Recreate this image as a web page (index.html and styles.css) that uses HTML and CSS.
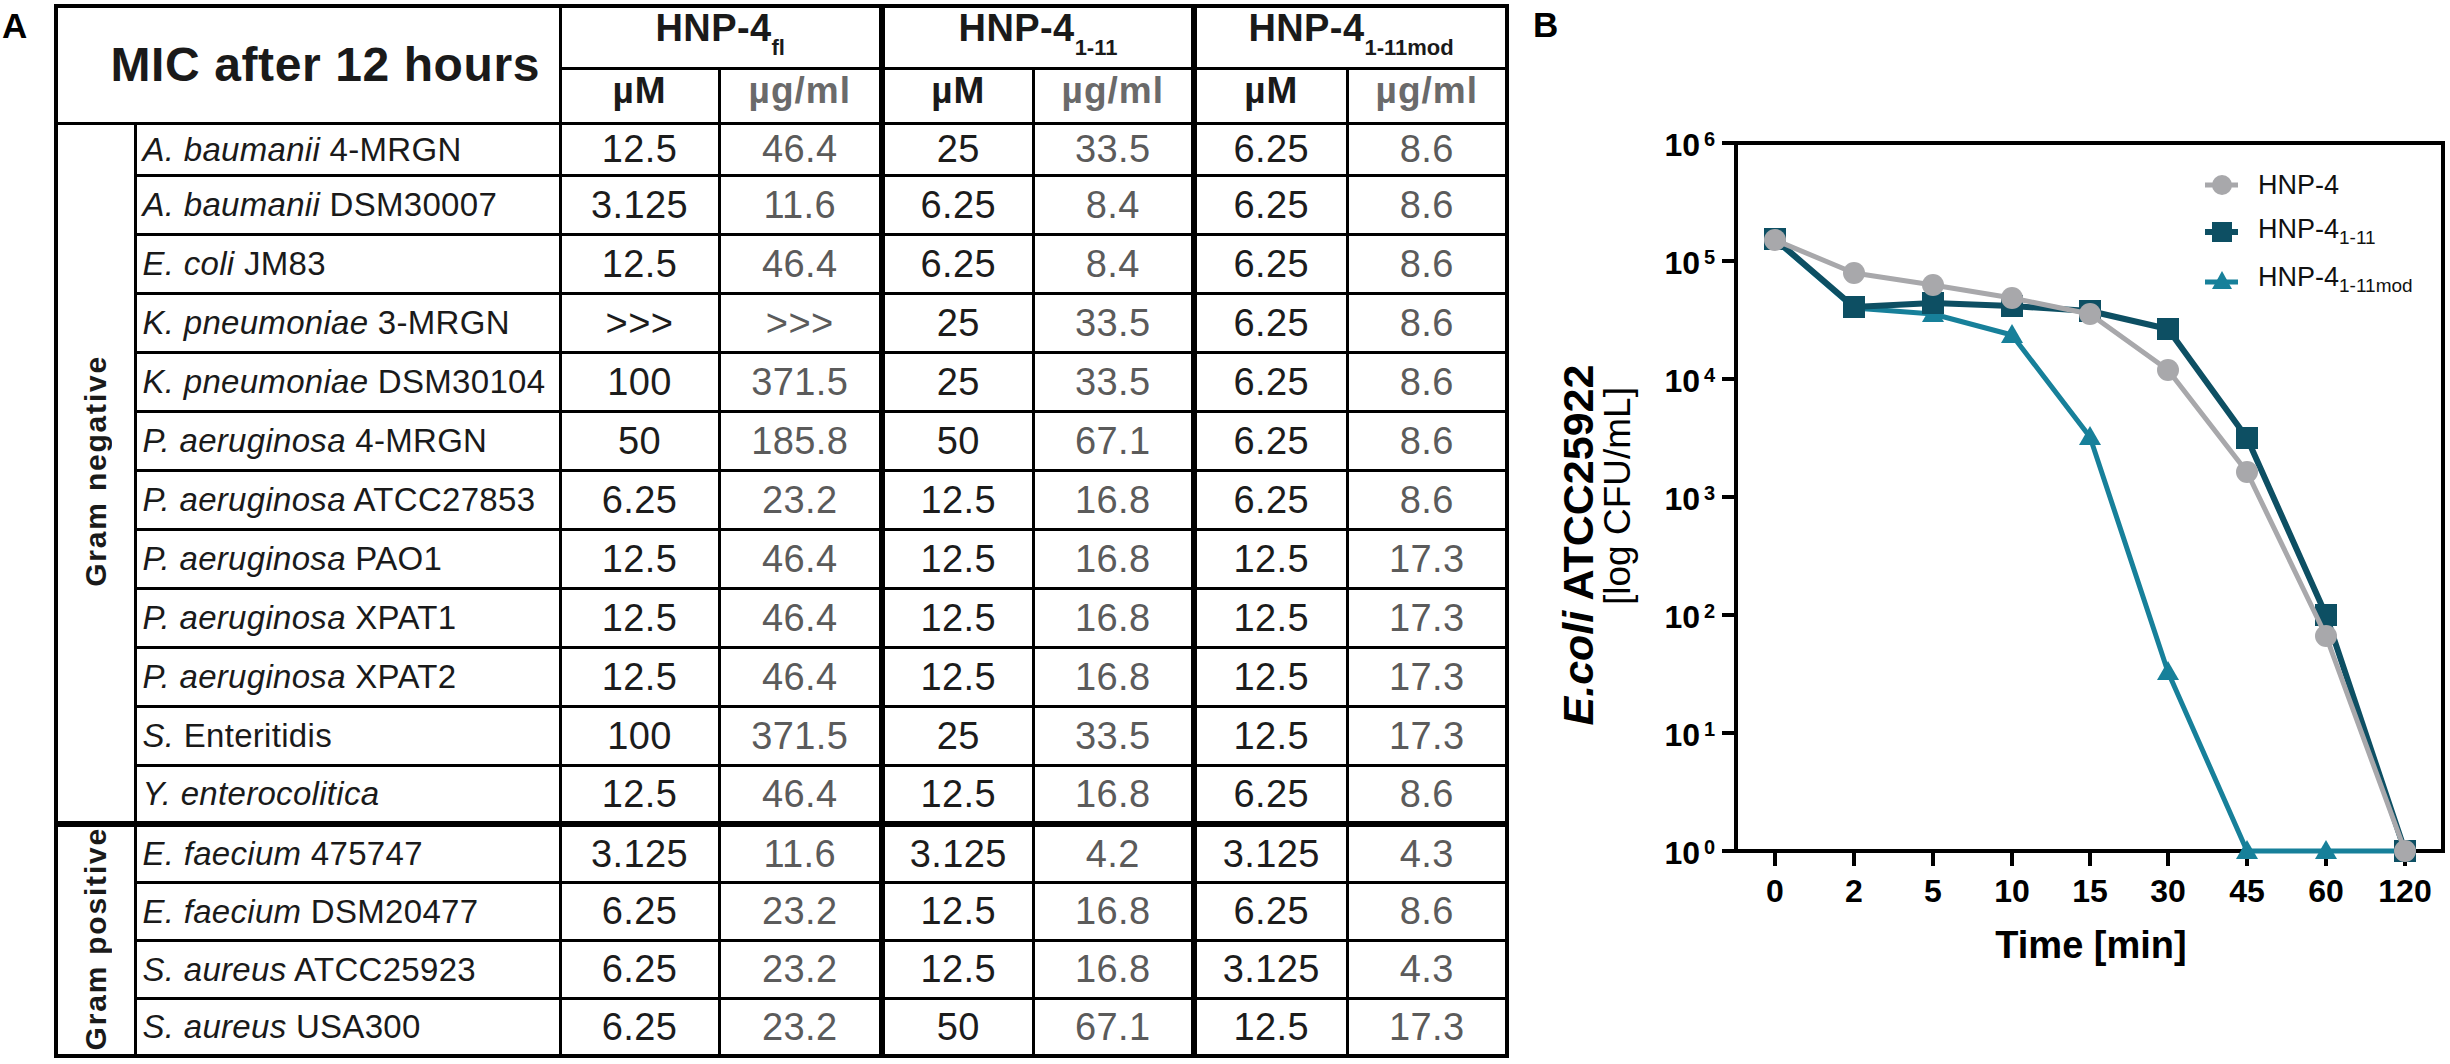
FILE: index.html
```html
<!DOCTYPE html>
<html lang="en">
<head>
  <meta charset="UTF-8">
  <title>MIC and time-kill of HNP-4 peptides</title>
  <link rel="stylesheet" href="styles.css">
</head>
<body>
  <div class="figure">
    <div class="panel-a">
      <div class="label label-a">A</div>
      <table class="mic">
        <colgroup>
          <col style="width:79px">
          <col style="width:425px">
          <col style="width:159px">
          <col style="width:163px">
          <col style="width:151px">
          <col style="width:161px">
          <col style="width:153px">
          <col style="width:160px">
        </colgroup>
        <thead>
          <tr class="h1">
            <th colspan="2" rowspan="2" class="title">MIC after 12 hours</th>
            <th colspan="2" class="pep">HNP-4<sub>fl</sub></th>
            <th colspan="2" class="pep grp">HNP-4<sub>1-11</sub></th>
            <th colspan="2" class="pep grp">HNP-4<sub>1-11mod</sub></th>
          </tr>
          <tr class="h2">
            <th class="unit">µM</th><th class="unit g">µg/ml</th>
            <th class="unit grp">µM</th><th class="unit g">µg/ml</th>
            <th class="unit grp">µM</th><th class="unit g">µg/ml</th>
          </tr>
        </thead>
        <tbody>
          <tr class="first">
            <th rowspan="12" class="gram"><span>Gram negative</span></th>
            <td class="sp"><i>A. baumanii</i> 4-MRGN</td>
            <td>12.5</td><td class="g">46.4</td><td class="grp">25</td><td class="g">33.5</td><td class="grp">6.25</td><td class="g">8.6</td>
          </tr>
          <tr>
            <td class="sp"><i>A. baumanii</i> DSM30007</td>
            <td>3.125</td><td class="g">11.6</td><td class="grp">6.25</td><td class="g">8.4</td><td class="grp">6.25</td><td class="g">8.6</td>
          </tr>
          <tr>
            <td class="sp"><i>E. coli</i> JM83</td>
            <td>12.5</td><td class="g">46.4</td><td class="grp">6.25</td><td class="g">8.4</td><td class="grp">6.25</td><td class="g">8.6</td>
          </tr>
          <tr>
            <td class="sp"><i>K. pneumoniae</i> 3-MRGN</td>
            <td class="arrows">&gt;&gt;&gt;</td><td class="g arrows">&gt;&gt;&gt;</td><td class="grp">25</td><td class="g">33.5</td><td class="grp">6.25</td><td class="g">8.6</td>
          </tr>
          <tr>
            <td class="sp"><i>K. pneumoniae</i> DSM30104</td>
            <td>100</td><td class="g">371.5</td><td class="grp">25</td><td class="g">33.5</td><td class="grp">6.25</td><td class="g">8.6</td>
          </tr>
          <tr>
            <td class="sp"><i>P. aeruginosa</i> 4-MRGN</td>
            <td>50</td><td class="g">185.8</td><td class="grp">50</td><td class="g">67.1</td><td class="grp">6.25</td><td class="g">8.6</td>
          </tr>
          <tr>
            <td class="sp"><i>P. aeruginosa</i> ATCC27853</td>
            <td>6.25</td><td class="g">23.2</td><td class="grp">12.5</td><td class="g">16.8</td><td class="grp">6.25</td><td class="g">8.6</td>
          </tr>
          <tr>
            <td class="sp"><i>P. aeruginosa</i> PAO1</td>
            <td>12.5</td><td class="g">46.4</td><td class="grp">12.5</td><td class="g">16.8</td><td class="grp">12.5</td><td class="g">17.3</td>
          </tr>
          <tr>
            <td class="sp"><i>P. aeruginosa</i> XPAT1</td>
            <td>12.5</td><td class="g">46.4</td><td class="grp">12.5</td><td class="g">16.8</td><td class="grp">12.5</td><td class="g">17.3</td>
          </tr>
          <tr>
            <td class="sp"><i>P. aeruginosa</i> XPAT2</td>
            <td>12.5</td><td class="g">46.4</td><td class="grp">12.5</td><td class="g">16.8</td><td class="grp">12.5</td><td class="g">17.3</td>
          </tr>
          <tr>
            <td class="sp"><i>S.</i> Enteritidis</td>
            <td>100</td><td class="g">371.5</td><td class="grp">25</td><td class="g">33.5</td><td class="grp">12.5</td><td class="g">17.3</td>
          </tr>
          <tr>
            <td class="sp"><i>Y. enterocolitica</i></td>
            <td>12.5</td><td class="g">46.4</td><td class="grp">12.5</td><td class="g">16.8</td><td class="grp">6.25</td><td class="g">8.6</td>
          </tr>
          <tr class="pos split">
            <th rowspan="4" class="gram"><span>Gram positive</span></th>
            <td class="sp"><i>E. faecium</i> 475747</td>
            <td>3.125</td><td class="g">11.6</td><td class="grp">3.125</td><td class="g">4.2</td><td class="grp">3.125</td><td class="g">4.3</td>
          </tr>
          <tr class="pos">
            <td class="sp"><i>E. faecium</i> DSM20477</td>
            <td>6.25</td><td class="g">23.2</td><td class="grp">12.5</td><td class="g">16.8</td><td class="grp">6.25</td><td class="g">8.6</td>
          </tr>
          <tr class="pos">
            <td class="sp"><i>S. aureus</i> ATCC25923</td>
            <td>6.25</td><td class="g">23.2</td><td class="grp">12.5</td><td class="g">16.8</td><td class="grp">3.125</td><td class="g">4.3</td>
          </tr>
          <tr class="pos">
            <td class="sp"><i>S. aureus</i> USA300</td>
            <td>6.25</td><td class="g">23.2</td><td class="grp">50</td><td class="g">67.1</td><td class="grp">12.5</td><td class="g">17.3</td>
          </tr>
        </tbody>
      </table>
    </div>

    <svg class="chart" width="930" height="1064" viewBox="1520 0 930 1064">
      <text class="panel-label" x="1533" y="37">B</text>

      <!-- axis titles -->
      <text class="ytitle" transform="translate(1593 545) rotate(-90)" text-anchor="middle"><tspan font-style="italic">E.coli</tspan> ATCC25922</text>
      <text class="yunit" transform="translate(1630 496) rotate(-90)" text-anchor="middle">[log CFU/mL]</text>
      <text class="xtitle" x="2091" y="958" text-anchor="middle">Time [min]</text>

      <!-- frame and ticks -->
      <path class="axis" d="M1736 143 H2443 V851 H1722 M1736 141 V853"/>
      <path class="axis" d="M1722 143H1736 M1722 261H1736 M1722 379H1736 M1722 497H1736 M1722 615H1736 M1722 733H1736"/>
      <path class="axis" d="M1775 851V866 M1854 851V866 M1933 851V866 M2012 851V866 M2090 851V866 M2168 851V866 M2247 851V866 M2326 851V866 M2405 851V866"/>

      <!-- y tick labels -->
      <text class="tick" x="1700" y="156" text-anchor="end">10</text><text class="sup" x="1704" y="146">6</text>
      <text class="tick" x="1700" y="274" text-anchor="end">10</text><text class="sup" x="1704" y="264">5</text>
      <text class="tick" x="1700" y="392" text-anchor="end">10</text><text class="sup" x="1704" y="382">4</text>
      <text class="tick" x="1700" y="510" text-anchor="end">10</text><text class="sup" x="1704" y="500">3</text>
      <text class="tick" x="1700" y="628" text-anchor="end">10</text><text class="sup" x="1704" y="618">2</text>
      <text class="tick" x="1700" y="746" text-anchor="end">10</text><text class="sup" x="1704" y="736">1</text>
      <text class="tick" x="1700" y="864" text-anchor="end">10</text><text class="sup" x="1704" y="854">0</text>

      <!-- x tick labels -->
      <text class="tick" x="1775" y="902" text-anchor="middle">0</text>
      <text class="tick" x="1854" y="902" text-anchor="middle">2</text>
      <text class="tick" x="1933" y="902" text-anchor="middle">5</text>
      <text class="tick" x="2012" y="902" text-anchor="middle">10</text>
      <text class="tick" x="2090" y="902" text-anchor="middle">15</text>
      <text class="tick" x="2168" y="902" text-anchor="middle">30</text>
      <text class="tick" x="2247" y="902" text-anchor="middle">45</text>
      <text class="tick" x="2326" y="902" text-anchor="middle">60</text>
      <text class="tick" x="2405" y="902" text-anchor="middle">120</text>

      <!-- HNP-4 1-11mod -->
      <polyline class="line teal" points="1775,240 1854,308 1933,314 2012,335 2090,437 2168,672 2247,851 2326,851 2405,851"/>
      <g class="teal-fill">
        <path d="M1775 229 L1786 248 L1764 248 Z"/>
        <path d="M1854 297 L1865 316 L1843 316 Z"/>
        <path d="M1933 303 L1944 322 L1922 322 Z"/>
        <path d="M2012 324 L2023 343 L2001 343 Z"/>
        <path d="M2090 426 L2101 445 L2079 445 Z"/>
        <path d="M2168 661 L2179 680 L2157 680 Z"/>
        <path d="M2247 840 L2258 859 L2236 859 Z"/>
        <path d="M2326 840 L2337 859 L2315 859 Z"/>
        <path d="M2405 840 L2416 859 L2394 859 Z"/>
      </g>

      <!-- HNP-4 1-11 -->
      <polyline class="line dark" points="1775,239 1854,307 1933,303 2012,306 2090,311 2168,329 2247,438 2326,615 2405,851"/>
      <g class="dark-fill">
        <rect x="1764" y="228" width="22" height="22"/>
        <rect x="1843" y="296" width="22" height="22"/>
        <rect x="1922" y="292" width="22" height="22"/>
        <rect x="2001" y="295" width="22" height="22"/>
        <rect x="2079" y="300" width="22" height="22"/>
        <rect x="2157" y="318" width="22" height="22"/>
        <rect x="2236" y="427" width="22" height="22"/>
        <rect x="2315" y="604" width="22" height="22"/>
        <rect x="2394" y="840" width="22" height="22"/>
      </g>

      <!-- HNP-4 -->
      <polyline class="line gray" points="1775,240 1854,273 1933,285 2012,298 2090,314 2168,370 2247,472 2326,636 2405,851"/>
      <g class="gray-fill">
        <circle cx="1775" cy="240" r="11"/>
        <circle cx="1854" cy="273" r="11"/>
        <circle cx="1933" cy="285" r="11"/>
        <circle cx="2012" cy="298" r="11"/>
        <circle cx="2090" cy="314" r="11"/>
        <circle cx="2168" cy="370" r="11"/>
        <circle cx="2247" cy="472" r="11"/>
        <circle cx="2326" cy="636" r="11"/>
        <circle cx="2405" cy="851" r="11"/>
      </g>

      <!-- legend -->
      <line class="line gray" x1="2205" y1="185" x2="2238" y2="185"/>
      <circle class="gray-fill" cx="2222" cy="185" r="10"/>
      <text class="legend" x="2258" y="194">HNP-4</text>

      <line class="line dark" x1="2205" y1="232" x2="2238" y2="232"/>
      <rect class="dark-fill" x="2212" y="222" width="20" height="20"/>
      <text class="legend" x="2258" y="238">HNP-4<tspan class="lsub" dy="6">1-11</tspan></text>

      <line class="line teal" x1="2205" y1="282" x2="2238" y2="282"/>
      <path class="teal-fill" d="M2222 271 L2232 289 L2212 289 Z"/>
      <text class="legend" x="2258" y="286">HNP-4<tspan class="lsub" dy="6">1-11mod</tspan></text>
    </svg>
  </div>
</body>
</html>
```

FILE: styles.css
```css
* {
  margin: 0;
  padding: 0;
  box-sizing: border-box;
}
body {
  background: #fff;
  color: #1a1a1a;
  font-family: 'Liberation Sans', Arial, sans-serif;
  width: 2450px;
  height: 1064px;
  overflow: hidden;
}
.figure {
  display: flex;
  align-items: flex-start;
}
.label {
  font-weight: 700;
  font-size: 35px;
  line-height: 1;
  color: #000;
}
.panel-a {
  display: flex;
  align-items: flex-start;
  flex: 0 0 1520px;
  padding-top: 4px;
}
.label-a {
  width: 54px;
  padding: 4px 0 0 2px;
}

/* table A */
.mic {
  border-collapse: collapse;
  table-layout: fixed;
  width: 1455px;
  border: 4px solid #000;
}
.mic th,
.mic td {
  border: 3px solid #000;
  text-align: center;
  white-space: nowrap;
  overflow: hidden;
  line-height: 1;
}
.mic td {
  font-size: 38px;
  letter-spacing: 0.4px;
  color: #1c1c1c;
}
.mic .g {
  color: #5b5b5b;
}
.mic .grp {
  border-left-width: 6px;
}
.h1 { height: 62px; }
.h2 { height: 55px; }
.mic tbody tr { height: 59px; }
.mic tbody tr.first { height: 52px; }
.mic tbody tr.pos { height: 58px; }
.mic tr.split td,
.mic tr.split th {
  border-top-width: 6px;
}
.title {
  font-size: 48px;
  letter-spacing: 0.6px;
  font-weight: 700;
  padding-left: 34px;
}
.pep {
  font-size: 38px;
  font-weight: 700;
  letter-spacing: 0.4px;
  padding-bottom: 6px;
}
.pep sub {
  font-size: 22px;
  vertical-align: -14px;
  letter-spacing: 0;
}
.unit {
  font-size: 37px;
  font-weight: 700;
  letter-spacing: 1px;
  padding-bottom: 10px;
}
.unit.g {
  color: #6a6a6a;
}
.mic td.sp {
  text-align: left;
  padding-left: 6px;
  font-size: 33px;
  letter-spacing: 0.3px;
  color: #1a1a1a;
}
.gram span {
  display: inline-block;
  writing-mode: vertical-rl;
  transform: rotate(180deg);
  font-size: 30px;
  font-weight: 700;
  letter-spacing: 1.8px;
  color: #1a1a1a;
}

/* chart B */
.chart {
  display: block;
  flex: 0 0 930px;
  font-family: 'Liberation Sans', Arial, sans-serif;
}
.panel-label {
  font-size: 35px;
  font-weight: 700;
  fill: #000;
}
.axis {
  fill: none;
  stroke: #000;
  stroke-width: 4;
}
.tick {
  font-size: 32px;
  font-weight: 700;
  fill: #000;
}
.sup {
  font-size: 20px;
  font-weight: 700;
  fill: #000;
}
.xtitle {
  font-size: 38px;
  font-weight: 700;
  fill: #000;
}
.ytitle {
  font-size: 43px;
  font-weight: 700;
  fill: #000;
}
.yunit {
  font-size: 37px;
  fill: #000;
}
.line {
  fill: none;
  stroke-width: 5;
  stroke-linejoin: round;
}
.line.gray { stroke: #a8a8ab; }
.line.dark { stroke: #0d4f63; stroke-width: 6; }
.line.teal { stroke: #17809a; }
.gray-fill { fill: #a8a8ab; }
.dark-fill { fill: #0d4f63; }
.teal-fill { fill: #17809a; }
.legend {
  font-size: 27px;
  fill: #111;
}
.lsub {
  font-size: 19px;
}
```
